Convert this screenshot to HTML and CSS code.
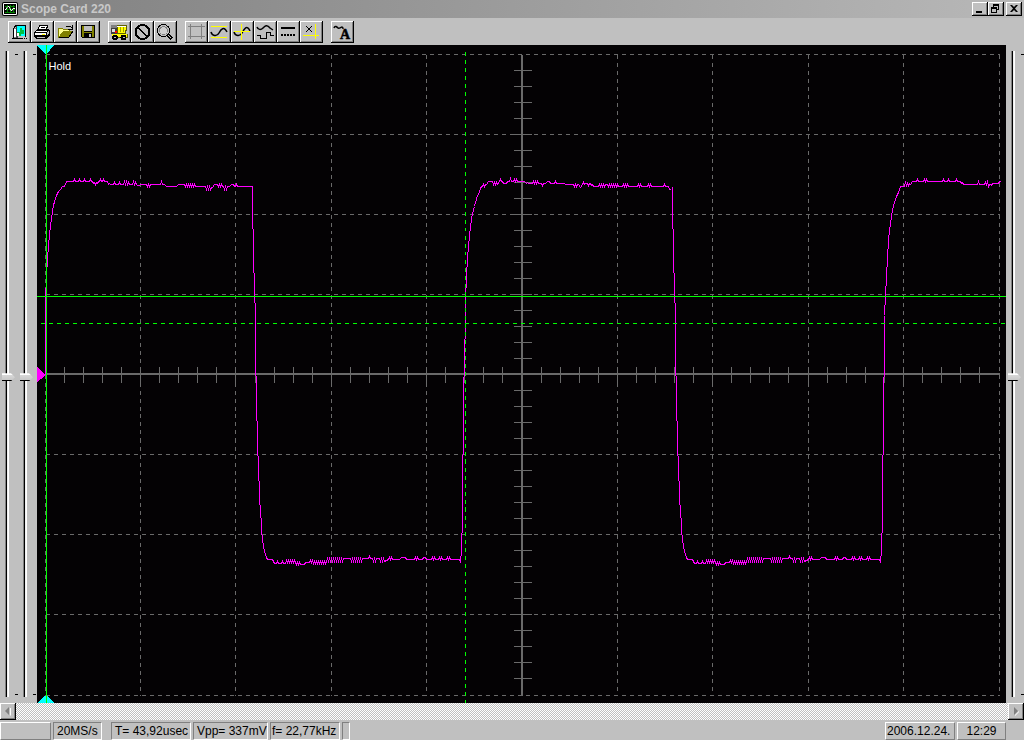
FILE: index.html
```
<!DOCTYPE html>
<html lang="en">
<head>
<meta charset="utf-8">
<title>Scope Card 220</title>
<link rel="stylesheet" href="styles.css">
</head>
<body>
<header class="titlebar">
    <svg class="logo" width="16" height="14" viewBox="0 0 16 14">
	<rect width="16" height="14" rx="2" fill="#000"/>
	<rect x="1" y="1" width="14" height="12" rx="1" fill="#fff"/>
	<rect x="2" y="2" width="12" height="10" fill="#000"/>
	<path d="M3 4.5h10M3 7.5h10M3 10.5h10M5.5 3v8M8.5 3v8M11.5 3v8" stroke="#008000"/>
	<path d="M3 7.5h1l1-2 1-1h1l1 2 1 2h1l1-2h2" fill="none" stroke="#fff"/>
    </svg>
    <h1>Scope Card 220</h1>
    <div class="winbuttons">
	<button class="winbtn" aria-label="Minimize"><svg viewBox="0 0 16 14"><path d="M4 9h6v2h-6z"/></svg></button>
	<button class="winbtn" aria-label="Restore"><svg viewBox="0 0 16 14"><path d="M5 2h6v6h-2v-1h1v-3h-4v1h-1zM3 5h6v6h-6zM4 7v3h4v-3z" fill-rule="evenodd"/></svg></button>
	<button class="winbtn close" aria-label="Close"><svg viewBox="0 0 16 14"><path d="M4 3h2l2 2 2-2h2l-3 3.5 3 3.5h-2l-2-2-2 2h-2l3-3.5z"/></svg></button>
    </div>
</header>

<nav class="toolbar">
    <div class="group">
	<button class="tool" aria-label="Exit"><svg viewBox="0 0 23 22">
	    <path d="M5 7h4v10h-4z" fill="#808080"/><path d="M6 8h2v8h-2z" fill="#fff"/>
	    <path d="M9 5h8v10h-8z" fill="#0ff"/><path d="M12 7h2v2h2v4h-3v2h-4v-4h3z" fill="#00c040"/><path d="M9 12h2v3h-2z" fill="#fff"/>
	    <path d="M5 17v-9l3-3.5h9v11" fill="none" stroke="#000"/><path d="M4 17.5h11M16 17.5h1M18 17.5h1" stroke="#000"/>
	    <path d="M8 5v12h2v-2h-1v-10z" fill="#404040"/>
	</svg></button>
	<button class="tool" aria-label="Print"><svg viewBox="0 0 23 22">
	    <path d="M7 8l2-4h8l-2 5z" fill="#fff" stroke="#000"/><path d="M10 6.5h4M9 8.5h4" stroke="#000"/>
	    <path d="M3 11l3-3h11l2 2v4l-3 4h-11l-2-2z" fill="#000"/>
	    <path d="M5 10h11l-1 1h-11zM4 12h11v2h-11z" fill="#fff"/><path d="M16 11h1v3h-1zM17 10h1v3h-1zM6 16h8v1h-8z" fill="#c0c0c0"/>
	    <path d="M11 13.5h3" stroke="#ff0"/>
	</svg></button>
	<button class="tool" aria-label="Open"><svg viewBox="0 0 23 22">
	    <path d="M4 7h4l1 1h6v3h-6l-4 5h-1z" fill="#ffff90" stroke="#808000"/>
	    <path d="M5 16l4-6h10l-4 6z" fill="#808000"/><path d="M5 16h10l4-6" fill="none" stroke="#000"/>
	    <path d="M12 6l1-1h3l2 2M18 4v4h-4" fill="none" stroke="#000"/>
	</svg></button>
	<button class="tool" aria-label="Save"><svg viewBox="0 0 23 22">
	    <path d="M4 4h14v13h-13l-1-1z" fill="#000"/><path d="M5 5h2v6h8v-6h2v11h-2v-4h-8v4h-2z" fill="#808000"/>
	    <path d="M7 5h8v5h-8zM12 13h2v3h-2z" fill="#c0c0c0"/>
	</svg></button>
    </div>
    <div class="group">
	<button class="tool" aria-label="Load"><svg viewBox="0 0 23 22">
	    <path d="M8 4h11v3l-1 6h2v4h-16v-7h5z" fill="#606000"/>
	    <path d="M10 6h8l-1 6h-7z" fill="#ff0"/><path d="M12 6h1v5h-1zM15 6h1v5h-1z" fill="#a0a000"/>
	    <path d="M9 5h9v1h-9z" fill="#fff"/>
	    <path d="M4 13h15v3h-15z" fill="#ff0"/>
	    <path d="M3 4h6v3h-6z" fill="#808080"/><path d="M3 7h6v6h-6z" fill="#404040"/><path d="M4 8h3v3h-3z" fill="#e0e0e0"/>
	    <path d="M7 10h2v2h-2z" fill="#f00"/>
	    <circle cx="7" cy="16.5" r="3"/><circle cx="15.5" cy="16.5" r="3"/><path d="M6 16h2v1h-2zM15 16h2v1h-2z" fill="#c0c0c0"/>
	</svg></button>
	<button class="tool" aria-label="Stop"><svg viewBox="0 0 23 22"><circle cx="11.5" cy="11" r="7" fill="none" stroke="#000" stroke-width="2"/><path d="M6.5 6l10 10" stroke="#000" stroke-width="2"/></svg></button>
	<button class="tool" aria-label="Zoom"><svg viewBox="0 0 23 22">
	    <circle cx="9.5" cy="9.5" r="6" fill="none" stroke="#000"/><circle cx="9.5" cy="9.5" r="4" fill="#d0d0d0" stroke="#808080"/>
	    <path d="M14 14l4 4" stroke="#000" stroke-width="3"/><path d="M14 14l3.5 3.5" stroke="#c0c0c0"/>
	</svg></button>
    </div>
    <div class="group">
	<button class="tool" aria-label="Grid"><svg viewBox="0 0 23 22"><path d="M5.5 3v15M16.5 3v15M3 5.5h17M3 15.5h17" stroke="#808080"/></svg></button>
	<button class="tool" aria-label="Levels"><svg viewBox="0 0 23 22"><path d="M3 5.5h16M3 16.5h16" stroke="#ff0"/><path class="wave" d="M3 11c1 4 6 5 8 1s5-7 8-1"/></svg></button>
	<button class="tool" aria-label="Cross"><svg viewBox="0 0 23 22"><path class="wave" d="M3 11c1 4 6 5 8 1s5-9 8-2"/><path d="M3 10.5h16M10.5 3v16" stroke="#ff0"/></svg></button>
	<button class="tool" aria-label="Channels"><svg viewBox="0 0 23 22"><path class="wave" d="M3 6c1 3 4 3 6 1s4-4 7 0l3 2"/><path d="M3 14.5h3.5v3h6v-6h4v3h3" fill="none" stroke="#000"/></svg></button>
	<button class="tool" aria-label="Line style"><svg viewBox="0 0 23 22"><path d="M4 7h14" stroke="#000" stroke-width="2"/><path d="M4 14h14" stroke="#000" stroke-width="2" stroke-dasharray="2 1"/></svg></button>
	<button class="tool" aria-label="Cursor"><svg viewBox="0 0 23 22"><path d="M6 5l6 6M12 5l-6 6" stroke="#000"/><path d="M15.5 3v15M3 14.5h16" stroke="#ff0"/></svg></button>
    </div>
    <div class="group">
	<button class="tool" aria-label="Text"><svg viewBox="0 0 23 22"><path class="wave" d="M3 7c1-3 3-1 4 0s3-1 4-1 1 1 1 2"/><text class="glyph" x="9" y="18">A</text></svg></button>
    </div>
</nav>

<main class="workspace">
    <div class="sliders">
	<div class="slider"><input type="range" min="0" max="200" value="101" aria-label="Channel A offset"><span class="ticks"></span></div>
	<div class="slider"><input type="range" min="0" max="200" value="101" aria-label="Channel B offset"><span class="ticks"></span></div>
    </div>
    <svg class="scope" viewBox="36.5 44.5 969 658" preserveAspectRatio="none">
	<!-- graticule -->
	<g class="grid">
	    <path d="M45 54V695M140 54V695M235 54V695M331 54V695M426 54V695M617 54V695M712 54V695M808 54V695M903 54V695M999 54V695"/>
	    <path d="M45 54H999M45 134H999M45 214H999M45 294H999M45 454H999M45 534H999M45 614H999M45 695H999"/>
	</g>
	<g class="axes">
	    <path d="M45 373.5H999M521.5 54V695"/>
	</g>
	<g class="marks">
	    <path d="M64 366v16M83 366v16M102 366v16M121 366v16M140 366v16M159 366v16M178 366v16M197 366v16M216 366v16M235 366v16M255 366v16M274 366v16M293 366v16M312 366v16M331 366v16M350 366v16M369 366v16M388 366v16M407 366v16M426 366v16M445 366v16M464 366v16M483 366v16M502 366v16"/>
	    <path d="M541 366v16M560 366v16M579 366v16M598 366v16M617 366v16M636 366v16M655 366v16M674 366v16M693 366v16M712 366v16M731 366v16M750 366v16M769 366v16M788 366v16M808 366v16M827 366v16M846 366v16M865 366v16M884 366v16M903 366v16M922 366v16M941 366v16M960 366v16M979 366v16"/>
	    <path d="M513 70h18M513 86h18M513 102h18M513 118h18M513 134h18M513 150h18M513 166h18M513 182h18M513 198h18M513 214h18M513 230h18M513 246h18M513 262h18M513 278h18M513 294h18M513 310h18M513 326h18M513 342h18M513 358h18"/>
	    <path d="M513 390h18M513 406h18M513 422h18M513 438h18M513 454h18M513 470h18M513 486h18M513 502h18M513 518h18M513 534h18M513 550h18M513 566h18M513 582h18M513 598h18M513 614h18M513 630h18M513 646h18M513 662h18M513 678h18"/>
	</g>
	<!-- channel A trace -->
	<g class="trace">
	    <path d="M45 374V300L46 276 47 257 48 246 49 234 50 225 51 218 52 211 53 205 54 201 56 195 58 191 60 189 62 186H64L66 181
		H73l1-2 1 2h3l1-2 1 2h3l1-2 1 2h4l1-2 1 2h1l1 2 1-1 1 2 1-2 1 1 1-2h1l1-2 1 2h1l1-2 1 2h3
		l1 3 1-1 1 1h3l1-2 1 2h3l1-2 1 2h3l1-3 1 3 1-3 1 3 1-2 1 2h3l1-3 1 3 1-2 1 2 1 1h2l1-1
		h6l1 2 1-2 1 2 1-2h10l1-3 1 3h2l2 2h10l2-2h6l1 2 1-2 1 2 1-2 1 2 1-2 1 2 1-2 1 2 1-2 1 2h10
		l1 3 1-3 1 3 1-3 1 3 1-2h1l2-3h3l1 2 1-2 1 2 1-2 1 2h1l1 3 1-3 1 3 1-3h2l2-2h2l1 2h1l1-2 1 2L252 186"/>
	    <path d="M465 300L466 276 467 257 468 247 469 235 470 227 471 219 472 213 474 206 475 202 477 195 479 192 480 187L482 186
		l1-2 1 2 1-2h1l2-3h4l1 3 1-2 1 2 1-2 1 2 2-3 1-2 1 2h1l1 2h3l1-2h2l1-3 1 3h2l1-2 1 2 1-2 1 2h7
		l2 2 1-1 1 1h4l1-2 1 2 1-2 1 2 1-2 1 2h3l1 2 1-2h2l2-2h2l1 2h4l1-2 1 2
		L573 184l1 2 1-2 1 2 1-2h1l2 3 2-3 1-2 1 2 1-1h2l1 2 1-2h1l1 2 1-1 1 2h5l1-2 1 2 1-2 1 2 1-2 1 2 1-2h2l1 2 1-2 1 2 1-2 1 2 1-2 1 2 1-2 1 2 1-2 1 2h4l1-2 1 2 1-2 1 2 1-2 1 2h9l1-2 1 2 1-2 1 2h6l1-2 1 2 1-2 1 2h12l1-2 1 2h3l1 3h1"/>
	    <path d="M884 315L886 276 887 257 888 240 889 230 890 223 891 216 892 209 894 202 896 196 898 192 900 186H904
		l1-4 1 3 1-2 1 2 1-2 1 1 2-3h4l1-2 1 2h5l1-2 1 2 1-2 1 2h15l1-2 1 2h3l1-2 1 2h6l1-2 1 2h3
		l1 2 1-1 1 2h14l1-3 1 3h5l1-2 1 2 1-3 1 5 1-2h1l1 1 1-2h6l1-2h1"/>
	    <!-- fall and low level, the second half period is the same one shifted -->
	    <g id="low">
		<path d="M252 186V228L253 229V272L254 273V302L255 303V375L256 376V420L257 421V455L258 456V480L259 481V504L260 505V517L261 518V530L262 539 263 546 264 551 266 557 267 559H272L274 563
		    h2l1-2 1 2h3l1-2 1 2h2l1-3 1 2 1-2 1 2 1-2 1 2 1-2 1 2 1-2 1 2 1 2 1-2 1 2 1-2 1 2h4l1-2h4l1-2 1 2 1-2 1 3 1-2 1 2 1-2 1 2 1-2 1 2 1-2 1 2 1-2 1 2 1-2 1 2
		    l1-2 1-3 1 3 1-3 1 3 1-3 1 3 1-3 1 3 1-3 1 3 1-3 1 3 1-3 1 3 1-3 1 3 1-3h7l1 3 1-3 1 3 1-3 1 3 1-3 1 3 1-3 1 3 1-3 1 3 1-3h6l1-2 1 2h2
		    l1 3 1-3 1 3 1-3h3l1 3 1-3 1 3 1-3 1 3L388 559l1-2 1 2 1-2 1 2h7l2-2h4l1 2h8l1-2 1 2 1-2 1 2h4l1-2h2l1 2h5l1-2 1 2 1-2 1 2h3l1-2 1 2 1-2 1 2h4l1-2 1 2 1-2 1 2H459L460 562 461 549V533L462 532V480"/>
	    </g>
	    <use href="#low" x="420"/>
	    <path d="M462 480V455L463 454V377L464 376V339L465 338V290"/>
	    <path d="M882 480V455L883 454V377L884 376V315"/>
	</g>
	<!-- cursors -->
	<path class="cursor" d="M36 296H1006"/>
	<path class="cursor dashed" d="M40 323H1006M465 51V704"/>
	<path class="time" d="M36.5 44.5H54L46 53.5H45zM36.5 703L45 695H46L54 703z"/>
	<path class="cursor" d="M46 44V704"/>
	<path class="level" d="M36.5 366.5L45 374.5 36.5 382z"/>
	<text class="state" x="48" y="69">Hold</text>
    </svg>
    <div class="sliders right">
	<div class="slider"><input type="range" min="0" max="200" value="101" aria-label="Trigger level"><span class="ticks"></span></div>
    </div>
</main>

<div class="scrollbar">
    <button class="arrow" aria-label="Scroll left"><svg viewBox="0 0 16 17"><path d="M10 5v8l1-1v-7z" fill="#fff"/><path d="M9 4v8l-4-4z"/></svg></button>
    <button class="arrow" aria-label="Scroll right"><svg viewBox="0 0 16 17"><path d="M7 13l4-4v-1l-4 4z" fill="#fff"/><path d="M6 4v8l4-4z"/></svg></button>
</div>

<footer class="statusbar">
    <span class="panel raised blank"></span>
    <span class="panel rate">20MS/s</span>
    <span class="panel period">T= 43,92usec</span>
    <span class="panel vpp">Vpp= 337mV</span>
    <span class="panel freq">f= 22,77kHz</span>
    <span class="panel"></span>
    <span class="panel raised date">2006.12.24.</span>
    <span class="panel raised clock">12:29</span>
</footer>
</body>
</html>
```
FILE: styles.css
```
* {
    box-sizing: border-box;
}
body {
    margin: 0;
    height: 100vh;
    display: flex;
    flex-direction: column;
    background: #c0c0c0;
    color: #000;
    font: 12px/16px "Liberation Sans", Arial, sans-serif;
    user-select: none;
}
button {
    display: block;
    margin: 0;
    padding: 0;
    border: 0;
    background: #c0c0c0;
    box-shadow: inset -1px -1px #000, inset 1px 1px #fff, inset -2px -2px #808080;
}
button svg {
    display: block;
    width: 100%;
    height: 100%;
}

/* title bar */
.titlebar {
    display: flex;
    align-items: center;
    height: 18px;
    padding: 0 2px;
    background: linear-gradient(to right, #808080, #b8b8b8);
}
.titlebar h1 {
    flex: 1;
    margin: 0;
    padding-left: 3px;
    color: #c8c8c8;
    font-size: 12px;
    font-weight: bold;
}
.winbuttons {
    display: flex;
}
.winbtn {
    width: 16px;
    height: 14px;
}
.winbtn.close {
    margin-left: 2px;
}

/* toolbar */
.toolbar {
    display: flex;
    gap: 8px;
    height: 27px;
    padding: 3px 8px;
}
.group {
    display: flex;
}
.tool {
    width: 23px;
    height: 22px;
}
.tool svg {
    shape-rendering: crispEdges;
}
.tool .wave {
    fill: none;
    stroke: #000;
    stroke-width: 1.5;
    shape-rendering: auto;
}
.glyph {
    font: bold 14px "Liberation Serif", "Times New Roman", serif;
    stroke: #000;
    stroke-width: .5;
}

/* sliders and screen */
.workspace {
    flex: 1;
    display: flex;
    min-height: 0;
}
.sliders {
    display: flex;
    gap: 2px;
    width: 37px;
    padding: 6px 0 6px 2px;
}
.sliders.right {
    width: 18px;
}
.slider {
    display: flex;
}
.slider input {
    appearance: none;
    writing-mode: vertical-lr;
    width: 13px;
    height: 100%;
    margin: 0;
    background: linear-gradient(to right, transparent 3px, #808080 3px, #808080 4px, #000 4px, #000 5px, #e0e0e0 5px, #fff 6px, #fff 7px, transparent 7px);
}
.slider input::-webkit-slider-thumb {
    appearance: none;
    width: 13px;
    height: 8px;
    border: 0;
    background: linear-gradient(53deg, transparent 11px, #000 11px) 9px 4px / 4px 4px no-repeat, linear-gradient(#fff 2px, #d8d8d8 2px, #c8c8c8 7px, #000 7px);
    clip-path: polygon(0 0, 9px 0, 13px 4px, 9px 8px, 0 8px);
}
.ticks {
    width: 3px;
    margin: 3px 0 2px;
    border-top: 1px solid #000;
    border-bottom: 1px solid #000;
}
.scope {
    flex: 1;
    min-width: 0;
    height: 100%;
    background: #040204;
    shape-rendering: crispEdges;
}
.scope path {
    fill: none;
}
.grid {
    stroke: #6a6a6a;
    stroke-dasharray: 4 4;
}
.axes {
    stroke: #6a6a6a;
    stroke-width: 2px;
}
.marks {
    stroke: #6a6a6a;
}
.trace {
    stroke: #f0f;
}
.cursor {
    stroke: #0f0;
}
.dashed {
    stroke-dasharray: 4 4;
}
.scope .time {
    fill: #0ff;
}
.scope .level {
    fill: #f0f;
}
.state {
    fill: #fff;
    font-size: 11px;
}

/* scroll bar */
.scrollbar {
    display: flex;
    justify-content: space-between;
    height: 17px;
    background: repeating-conic-gradient(#fff 0 25%, #c0c0c0 0 50%) 0 0 / 2px 2px;
}
.arrow {
    width: 16px;
    fill: #808080;
}

/* status bar */
.statusbar {
    display: flex;
    gap: 2px;
    height: 20px;
    padding: 2px 18px 0 0;
}
.panel {
    flex: none;
    min-width: 8px;
    padding: 0 3px;
    overflow: hidden;
    white-space: nowrap;
    border: 1px solid;
    border-color: #808080 #fff #fff #808080;
}
.panel.raised {
    border-color: #fff #808080 #808080 #fff;
}
.blank {
    width: 51px;
}
.rate {
    width: 49px;
}
.period {
    width: 80px;
    margin-left: 7px;
}
.vpp {
    width: 75px;
}
.freq {
    width: 70px;
    padding: 0 1px;
}
.date {
    width: 70px;
    margin-left: auto;
    padding: 0 1px;
}
.clock {
    width: 49px;
    text-align: center;
}
```
